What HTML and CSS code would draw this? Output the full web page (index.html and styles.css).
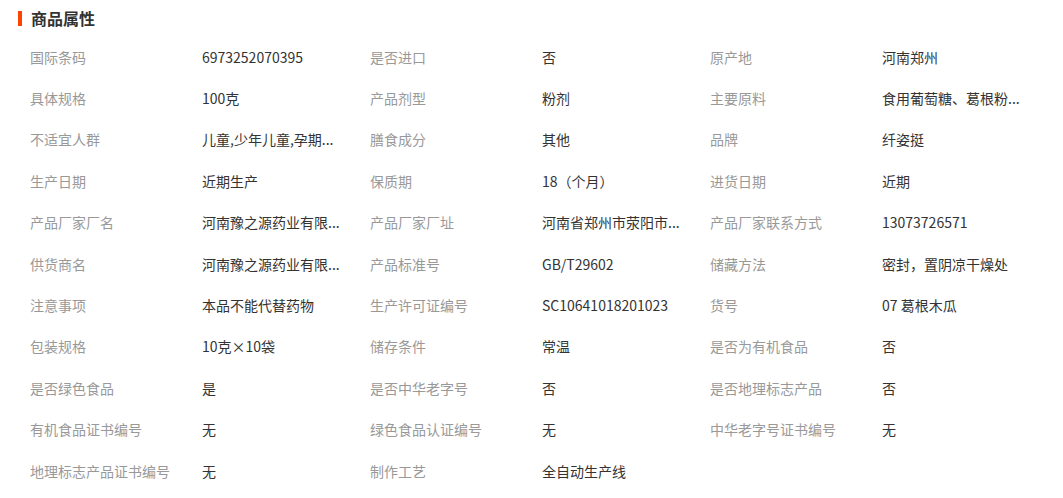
FILE: index.html
```html
<!DOCTYPE html>
<html lang="zh-CN">

<head>
  <meta charset="UTF-8">
  <meta name="viewport" content="width=device-width, initial-scale=1.0">
  <title>商品属性</title>
  <link rel="stylesheet" href="styles.css">
</head>

<body>
  <div class="attrs">
    <h2 class="attrs-title">商品属性</h2>
    <ul class="attrs-list">
      <li><span class="attr-name">国际条码</span><span class="attr-value">6973252070395</span></li>
      <li><span class="attr-name">是否进口</span><span class="attr-value">否</span></li>
      <li><span class="attr-name">原产地</span><span class="attr-value">河南郑州</span></li>

      <li><span class="attr-name">具体规格</span><span class="attr-value">100克</span></li>
      <li><span class="attr-name">产品剂型</span><span class="attr-value">粉剂</span></li>
      <li><span class="attr-name">主要原料</span><span class="attr-value">食用葡萄糖、葛根粉...</span></li>

      <li><span class="attr-name">不适宜人群</span><span class="attr-value">儿童,少年儿童,孕期...</span></li>
      <li><span class="attr-name">膳食成分</span><span class="attr-value">其他</span></li>
      <li><span class="attr-name">品牌</span><span class="attr-value">纤姿挺</span></li>

      <li><span class="attr-name">生产日期</span><span class="attr-value">近期生产</span></li>
      <li><span class="attr-name">保质期</span><span class="attr-value">18（个月）</span></li>
      <li><span class="attr-name">进货日期</span><span class="attr-value">近期</span></li>

      <li><span class="attr-name">产品厂家厂名</span><span class="attr-value">河南豫之源药业有限...</span></li>
      <li><span class="attr-name">产品厂家厂址</span><span class="attr-value">河南省郑州市荥阳市...</span></li>
      <li><span class="attr-name">产品厂家联系方式</span><span class="attr-value">13073726571</span></li>

      <li><span class="attr-name">供货商名</span><span class="attr-value">河南豫之源药业有限...</span></li>
      <li><span class="attr-name">产品标准号</span><span class="attr-value">GB/T29602</span></li>
      <li><span class="attr-name">储藏方法</span><span class="attr-value">密封，置阴凉干燥处</span></li>

      <li><span class="attr-name">注意事项</span><span class="attr-value">本品不能代替药物</span></li>
      <li><span class="attr-name">生产许可证编号</span><span class="attr-value">SC10641018201023</span></li>
      <li><span class="attr-name">货号</span><span class="attr-value">07 葛根木瓜</span></li>

      <li><span class="attr-name">包装规格</span><span class="attr-value">10克×10袋</span></li>
      <li><span class="attr-name">储存条件</span><span class="attr-value">常温</span></li>
      <li><span class="attr-name">是否为有机食品</span><span class="attr-value">否</span></li>

      <li><span class="attr-name">是否绿色食品</span><span class="attr-value">是</span></li>
      <li><span class="attr-name">是否中华老字号</span><span class="attr-value">否</span></li>
      <li><span class="attr-name">是否地理标志产品</span><span class="attr-value">否</span></li>

      <li><span class="attr-name">有机食品证书编号</span><span class="attr-value">无</span></li>
      <li><span class="attr-name">绿色食品认证编号</span><span class="attr-value">无</span></li>
      <li><span class="attr-name">中华老字号证书编号</span><span class="attr-value">无</span></li>

      <li><span class="attr-name">地理标志产品证书编号</span><span class="attr-value">无</span></li>
      <li><span class="attr-name">制作工艺</span><span class="attr-value">全自动生产线</span></li>
    </ul>
  </div>
</body>

</html>
```

FILE: styles.css
```css
body,
html {
  margin: 0;
  padding: 0;
  background-color: #fff;
  font-family: "Noto Sans CJK SC", "Liberation Sans", sans-serif;
}

.attrs {
  width: 1063px;
}

.attrs-title {
  display: flex;
  align-items: center;
  margin: 0;
  padding-left: 18px;
  height: 36px;
  font-size: 16px;
  font-weight: bold;
  color: #333;
}

.attrs-title::before {
  content: "";
  width: 4px;
  height: 15px;
  margin-right: 9px;
  background-color: #ff4400;
}

.attrs-list {
  display: grid;
  grid-template-columns: repeat(3, 340px);
  grid-auto-rows: 41.4px;
  margin: 0;
  padding: 0 0 0 30px;
  list-style: none;
  font-size: 14px;
}

.attrs-list li {
  display: flex;
  align-items: center;
  white-space: nowrap;
}

.attr-name {
  width: 172px;
  flex-shrink: 0;
  color: #999;
}

.attr-value {
  color: #333;
}
```
